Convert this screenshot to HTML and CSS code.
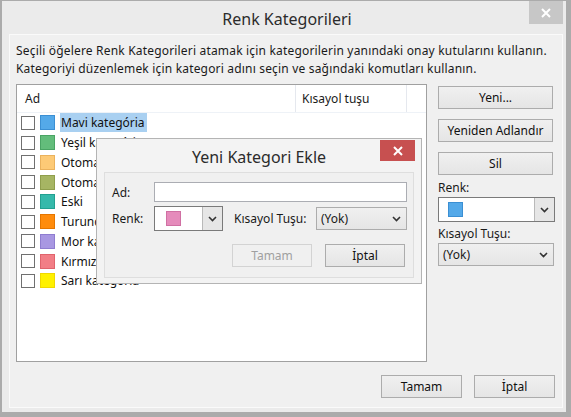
FILE: index.html
```html
<!DOCTYPE html>
<html lang="tr">
<head>
<meta charset="utf-8">
<title>Renk Kategorileri</title>
<link rel="stylesheet" href="styles.css">
</head>
<body>
<div class="window">
  <div class="titlebar">
    <span></span>
    <div class="title">Renk Kategorileri</div>
    <div class="close gray"><svg width="12" height="12" viewBox="0 0 12 12"><path d="M2 2 L10 10 M10 2 L2 10" stroke="#fff" stroke-width="2"/></svg></div>
  </div>
  <div class="panel">
    <p class="desc">Seçili öğelere Renk Kategorileri atamak için kategorilerin yanındaki onay kutularını kullanın.<br>Kategoriyi düzenlemek için kategori adını seçin ve sağındaki komutları kullanın.</p>
    <div class="main">
      <div class="list">
        <div class="list-head">
          <div class="col-name">Ad</div>
          <div class="col-key">Kısayol tuşu</div>
          <div class="col-rest"></div>
        </div>
        <div class="row"><span class="check"></span><span class="sw c-blue"></span><span class="label selected">Mavi kategória</span></div>
        <div class="row"><span class="check"></span><span class="sw c-green"></span><span class="label">Yeşil kategória</span></div>
        <div class="row"><span class="check"></span><span class="sw c-peach"></span><span class="label">Otomatik kategori</span></div>
        <div class="row"><span class="check"></span><span class="sw c-olive"></span><span class="label">Otomatik kategori</span></div>
        <div class="row"><span class="check"></span><span class="sw c-teal"></span><span class="label">Eski</span></div>
        <div class="row"><span class="check"></span><span class="sw c-orange"></span><span class="label">Turuncu kategória</span></div>
        <div class="row"><span class="check"></span><span class="sw c-purple"></span><span class="label">Mor kategória</span></div>
        <div class="row"><span class="check"></span><span class="sw c-red"></span><span class="label">Kırmızı kategória</span></div>
        <div class="row"><span class="check"></span><span class="sw c-yellow"></span><span class="label">Sarı kategória</span></div>
      </div>
      <div class="side">
        <div class="btn side-btn">Yeni...</div>
        <div class="btn side-btn">Yeniden Adlandır</div>
        <div class="btn side-btn">Sil</div>
        <div class="side-label">Renk:</div>
        <div class="combo side-combo"><span class="combo-val"><span class="sw c-blue"></span></span><span class="combo-drop"><svg width="9" height="6" viewBox="0 0 9 6"><path d="M1 1 L4.5 4.5 L8 1" fill="none" stroke="#333" stroke-width="1.6"/></svg></span></div>
        <div class="side-label">Kısayol Tuşu:</div>
        <div class="select side-select"><span>(Yok)</span><svg width="9" height="6" viewBox="0 0 9 6"><path d="M1 1 L4.5 4.5 L8 1" fill="none" stroke="#333" stroke-width="1.6"/></svg></div>
      </div>
    </div>
    <div class="bottom">
      <div class="btn bottom-btn">Tamam</div>
      <div class="btn bottom-btn">İptal</div>
    </div>
  </div>
</div>

<div class="dialog">
  <div class="titlebar d-titlebar">
    <span></span>
    <div class="title d-title">Yeni Kategori Ekle</div>
    <div class="close red"><svg width="12" height="12" viewBox="0 0 12 12"><path d="M2 2 L10 10 M10 2 L2 10" stroke="#fff" stroke-width="2"/></svg></div>
  </div>
  <div class="d-panel">
    <div class="d-row d-row1">
      <span class="d-label">Ad:</span>
      <span class="input"></span>
    </div>
    <div class="d-row d-row2">
      <span class="d-label">Renk:</span>
      <div class="combo d-combo"><span class="combo-val"><span class="sw c-pink"></span></span><span class="combo-drop"><svg width="9" height="6" viewBox="0 0 9 6"><path d="M1 1 L4.5 4.5 L8 1" fill="none" stroke="#333" stroke-width="1.6"/></svg></span></div>
      <span class="d-key-label">Kısayol Tuşu:</span>
      <div class="select d-select"><span>(Yok)</span><svg width="9" height="6" viewBox="0 0 9 6"><path d="M1 1 L4.5 4.5 L8 1" fill="none" stroke="#333" stroke-width="1.6"/></svg></div>
    </div>
    <div class="d-row d-row3">
      <div class="btn d-btn disabled">Tamam</div>
      <div class="btn d-btn">İptal</div>
    </div>
  </div>
</div>
</body>
</html>
```

FILE: styles.css
```css
* { box-sizing: border-box; }
html, body { margin: 0; }
body {
  width: 571px;
  height: 417px;
  padding: 1px 5px 5px 2px;
  background: #ababab;
  font-family: "Noto Sans", "Open Sans", sans-serif;
  font-size: 12px;
  color: #1a1a1a;
  overflow: hidden;
  position: relative;
}
.window {
  height: 411px;
  background: #ebebeb;
  display: flex;
  flex-direction: column;
}
.titlebar {
  height: 33px;
  display: grid;
  grid-template-columns: 1fr auto 1fr;
}
.title {
  align-self: center;
  font-size: 16px;
  color: #2b2b2b;
  padding-top: 2px;
  padding-left: 6px;
}
.close {
  justify-self: end;
  align-self: start;
  width: 34px;
  height: 23px;
  display: flex;
  align-items: center;
  justify-content: center;
  margin-right: 3px;
}
.close.gray { background: #c7c7c7; }
.close.red { background: #c75050; width: 35px; height: 21px; margin-top: 1px; margin-right: 6px; }

.panel {
  flex: 1;
  margin: 0 3px 4px 7px;
  background: #f0f0f0;
  border: 1px solid #fafafa;
  padding: 0 7px 0 6px;
  display: flex;
  flex-direction: column;
}
.desc {
  margin: 6px 0 0 0;
  line-height: 18px;
  letter-spacing: 0.18px;
  padding-top: 1px;
  height: 37px;
}
.main {
  display: flex;
  margin-top: 6px;
  gap: 11px;
}
.list {
  width: 412px;
  height: 278px;
  background: #fff;
  border: 1px solid #a0a0a0;
}
.list-head {
  display: flex;
  height: 28px;
  border-bottom: 1px solid #eef2f7;
}
.list-head > div {
  line-height: 27px;
}
.col-name { width: 279px; padding-left: 8px; border-right: 1px solid #e5e8ee; }
.col-key { width: 111px; padding-left: 6px; border-right: 1px solid #e5e8ee; }
.col-rest { flex: 1; }
.row {
  height: 19.75px;
  display: flex;
  align-items: center;
  padding-left: 4px;
}
.check {
  width: 14px;
  height: 14px;
  border: 1px solid #707070;
  background: #fff;
}
.sw {
  width: 15px;
  height: 15px;
  border: 1px solid;
  display: block;
}
.row .sw { margin-left: 5px; }
.label {
  margin-left: 5px;
  padding: 0 2px 0 1px;
  line-height: 19px;
  color: #111;
}
.label.selected { background: #a9d0f1; }
.c-blue { background: #54a9e9; border-color: #3b8fd3; }
.c-green { background: #63bd7b; border-color: #4aa464; }
.c-peach { background: #fdca76; border-color: #eab25d; }
.c-olive { background: #a6b563; border-color: #8f9e4c; }
.c-teal { background: #35b9ab; border-color: #22a091; }
.c-orange { background: #ff8c0d; border-color: #e57600; }
.c-purple { background: #a897e2; border-color: #8f7dd0; }
.c-red { background: #f27e86; border-color: #e0646d; }
.c-yellow { background: #fff100; border-color: #f0d800; }
.c-pink { background: #e58bbb; border-color: #d070a3; }

.side {
  width: 117px;
  display: flex;
  flex-direction: column;
  padding-top: 2px;
}
.btn {
  height: 23px;
  border: 1px solid #acacac;
  background: linear-gradient(#f0f0f0, #e5e5e5);
  display: flex;
  align-items: center;
  justify-content: center;
  color: #111;
}
.side-btn { width: 115px; margin-bottom: 10px; }
.side-btn:nth-child(3) { margin-bottom: 5px; }
.side-label { line-height: 16px; height: 17px; }
.combo {
  display: flex;
  border: 1px solid #7a7a7a;
  background: #fff;
}
.combo-val { flex: 1; display: flex; align-items: center; padding-left: 9px; }
.combo-drop {
  width: 20px;
  border-left: 1px solid #b9b9b9;
  background: #e6e6e6;
  display: flex;
  align-items: center;
  justify-content: center;
}
.side-combo { height: 25px; width: 117px; margin-bottom: 4px; }
.select {
  display: flex;
  align-items: center;
  justify-content: space-between;
  border: 1px solid #acacac;
  background: linear-gradient(#f0f0f0, #e5e5e5);
  padding: 0 5px 0 4px;
}
.side-select { height: 23px; width: 116px; }
.bottom {
  display: flex;
  justify-content: flex-end;
  gap: 12px;
  margin-top: 13px;
}
.bottom-btn { width: 81px; }

.dialog {
  position: absolute;
  left: 96px;
  top: 138px;
  width: 326px;
  height: 146px;
  background: #f3f3f3;
  border: 1px solid #b4b4b4;
  display: flex;
  flex-direction: column;
}
.d-titlebar { height: 33px; }
.d-title { font-size: 16px; padding-left: 0; padding-top: 2px; color: #2b2b2b; }
.d-panel {
  flex: 1;
  margin: 0 7px 5px 7px;
  border: 1px solid #dedede;
  background: #f0f0f0;
  padding: 9px 6px 0 7px;
}
.d-row { display: flex; align-items: center; }
.d-label { width: 42px; }
.input {
  width: 253px;
  height: 20px;
  border: 1px solid #abadb3;
  background: #fff;
}
.d-row2 { margin-top: 4px; height: 25px; }
.d-combo { width: 69px; height: 25px; }
.d-combo .combo-val { padding-left: 11px; }
.d-key-label { margin-left: 11px; width: 82px; }
.d-select { width: 91px; height: 23px; }
.d-row3 { justify-content: flex-end; gap: 13px; margin-top: 13px; padding-right: 2px; }
.d-btn { width: 80px; }
.d-btn.disabled { color: #a0a0a0; border-color: #d3d3d3; background: #f0f0f0; }
```
